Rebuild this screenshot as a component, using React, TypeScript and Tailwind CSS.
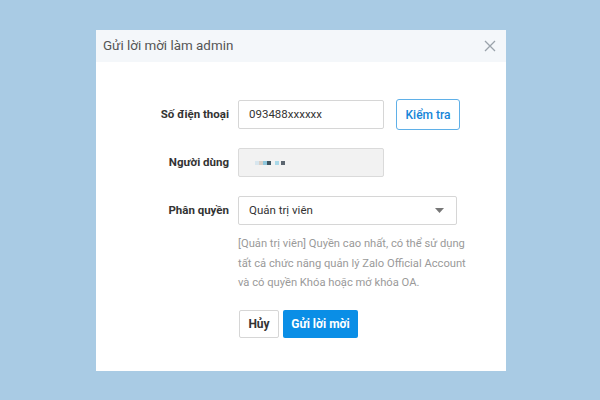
import React from "react";

function CloseIcon() {
  return (
    <svg width="12" height="12" viewBox="0 0 12 12" fill="none">
      <path d="M1 1L11 11M11 1L1 11" stroke="#9aa3ab" strokeWidth="1.3" />
    </svg>
  );
}

export default function App() {
  return (
    <div
      className="w-[600px] h-[400px] bg-[#a9cbe4] pt-[30px] pl-[96px]"
      style={{ fontFamily: "Roboto, 'Liberation Sans', sans-serif" }}
    >
      <div className="w-[410px] h-[341px] bg-white flex flex-col">
        <div className="h-[32px] bg-[#f4f7fa] flex items-center justify-between pl-[7px] pr-[10px]">
          <span className="text-[13.4px] text-[#555]">Gửi lời mời làm admin</span>
          <CloseIcon />
        </div>

        <div className="flex flex-col pt-[37px]">
          <div className="flex items-center h-[31px]">
            <label className="w-[133px] text-right text-[11.5px] font-bold text-[#333]">Số điện thoại</label>
            <div className="ml-[9px] w-[146px] h-[29px] border border-[#d6d6d6] rounded-[2px] flex items-center px-[10px] text-[11.5px] text-[#333]">
              093488xxxxxx
            </div>
            <button className="ml-[12px] w-[64px] h-[31px] border border-[#5fb0e8] rounded-[3px] text-[12px] font-medium text-[#1585d8]">
              Kiểm tra
            </button>
          </div>

          <div className="flex items-center h-[29px] mt-[18px]">
            <label className="w-[133px] text-right text-[11.5px] font-bold text-[#333]">Người dùng</label>
            <div className="ml-[9px] w-[146px] h-[29px] border border-[#dadada] bg-[#f2f2f2] rounded-[2px] flex items-center pl-[16px]">
              <span className="w-[4px] h-[4px] bg-[#d8e6ee]" />
              <span className="w-[4px] h-[4px] bg-[#d9d0c8]" />
              <span className="w-[4px] h-[4px] bg-[#8fc7dc]" />
              <span className="w-[4px] h-[4px] bg-[#3f5560]" />
              <span className="w-[4px] h-[4px] ml-[4px] bg-[#a9d8e8]" />
              <span className="w-[4px] h-[4px] ml-[2px] bg-[#5c6670]" />
            </div>
          </div>

          <div className="flex items-center h-[29px] mt-[19px]">
            <label className="w-[133px] text-right text-[11.5px] font-bold text-[#333]">Phân quyền</label>
            <div className="ml-[9px] w-[219px] h-[29px] border border-[#d6d6d6] rounded-[2px] flex items-center justify-between pl-[10px] pr-[12px] text-[11.5px] text-[#333]">
              <span>Quản trị viên</span>
              <svg width="9" height="5" viewBox="0 0 9 5">
                <path d="M0 0H9L4.5 5Z" fill="#777" />
              </svg>
            </div>
          </div>

          <p className="ml-[142px] mt-[9px] whitespace-nowrap text-[11.2px] leading-[19.5px] text-[#9a9a9a]">
            [Quản trị viên] Quyền cao nhất, có thể sử dụng
            <br />
            tất cả chức năng quản lý Zalo Official Account
            <br />
            và có quyền Khóa hoặc mở khóa OA.
          </p>

          <div className="ml-[143px] mt-[17px] flex gap-[4px]">
            <button className="w-[40px] h-[28px] border border-[#d6d6d6] rounded-[2px] text-[12px] font-bold text-[#333] bg-white">
              Hủy
            </button>
            <button className="w-[75px] h-[28px] rounded-[2px] text-[12px] font-bold text-white bg-[#0a8ee6]">
              Gửi lời mời
            </button>
          </div>
        </div>
      </div>
    </div>
  );
}
